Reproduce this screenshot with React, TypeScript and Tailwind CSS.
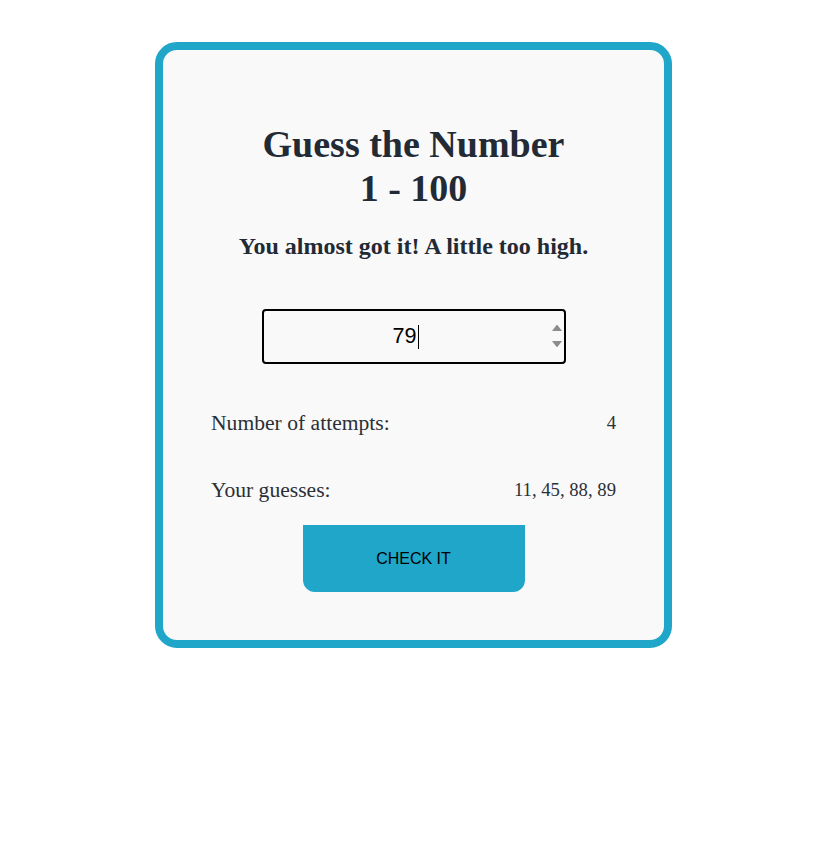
export default function App() {
  return (
    <div className="min-h-screen bg-white pt-[42px] pl-[155px]">
      <div className="flex w-[517px] flex-col items-center rounded-[22px] border-[8px] border-[#1fa6c9] bg-[#f9f9f9] px-[48px] pt-[72px] pb-[48px]">
        <h1 className="text-center font-['Liberation_Serif',serif] text-[38px] font-bold leading-[44px] text-[#222a35]">
          Guess the Number
          <br />
          1 - 100
        </h1>
        <h3 className="mt-[23px] text-center font-['Liberation_Serif',serif] text-[24px] font-bold leading-[27px] text-[#222a35]">
          You almost got it! A little too high.
        </h3>

        <div className="relative mt-[49px] h-[55px] w-[304px] rounded-[4px] border-2 border-black bg-[#f9f9f9]">
          <div className="flex h-full items-center justify-center pr-[16px] font-['Liberation_Sans',Arial,sans-serif] text-[21.6px] text-black">
            79<span className="ml-px inline-block h-[24px] w-px bg-black" />
          </div>
          <div className="absolute top-[14px] right-[2px] flex flex-col items-center gap-[10px]">
            <svg width="10" height="6" viewBox="0 0 10 6">
              <path d="M0 6 L4.2 0.4 Q5 -0.3 5.8 0.4 L10 6 Z" fill="#8c8c8c" />
            </svg>
            <svg width="10" height="6" viewBox="0 0 10 6">
              <path d="M0 0 L4.2 5.6 Q5 6.3 5.8 5.6 L10 0 Z" fill="#8c8c8c" />
            </svg>
          </div>
        </div>

        <div className="mt-[26px] w-full font-['Liberation_Serif',serif] text-[#2b2f36]">
          <div className="flex h-[67px] items-center justify-between">
            <span className="text-[21.6px]">Number of attempts:</span>
            <span className="text-[18.7px]">4</span>
          </div>
          <div className="flex h-[67px] items-center justify-between">
            <span className="text-[21.6px]">Your guesses:</span>
            <span className="text-[18.7px]">11, 45, 88, 89</span>
          </div>
        </div>

        <button className="mt-px flex h-[67px] w-[222px] items-center justify-center rounded-b-[12px] bg-[#1fa6c9] font-['Liberation_Sans',Arial,sans-serif] text-[16px] text-black">
          CHECK IT
        </button>
      </div>
    </div>
  );
}
